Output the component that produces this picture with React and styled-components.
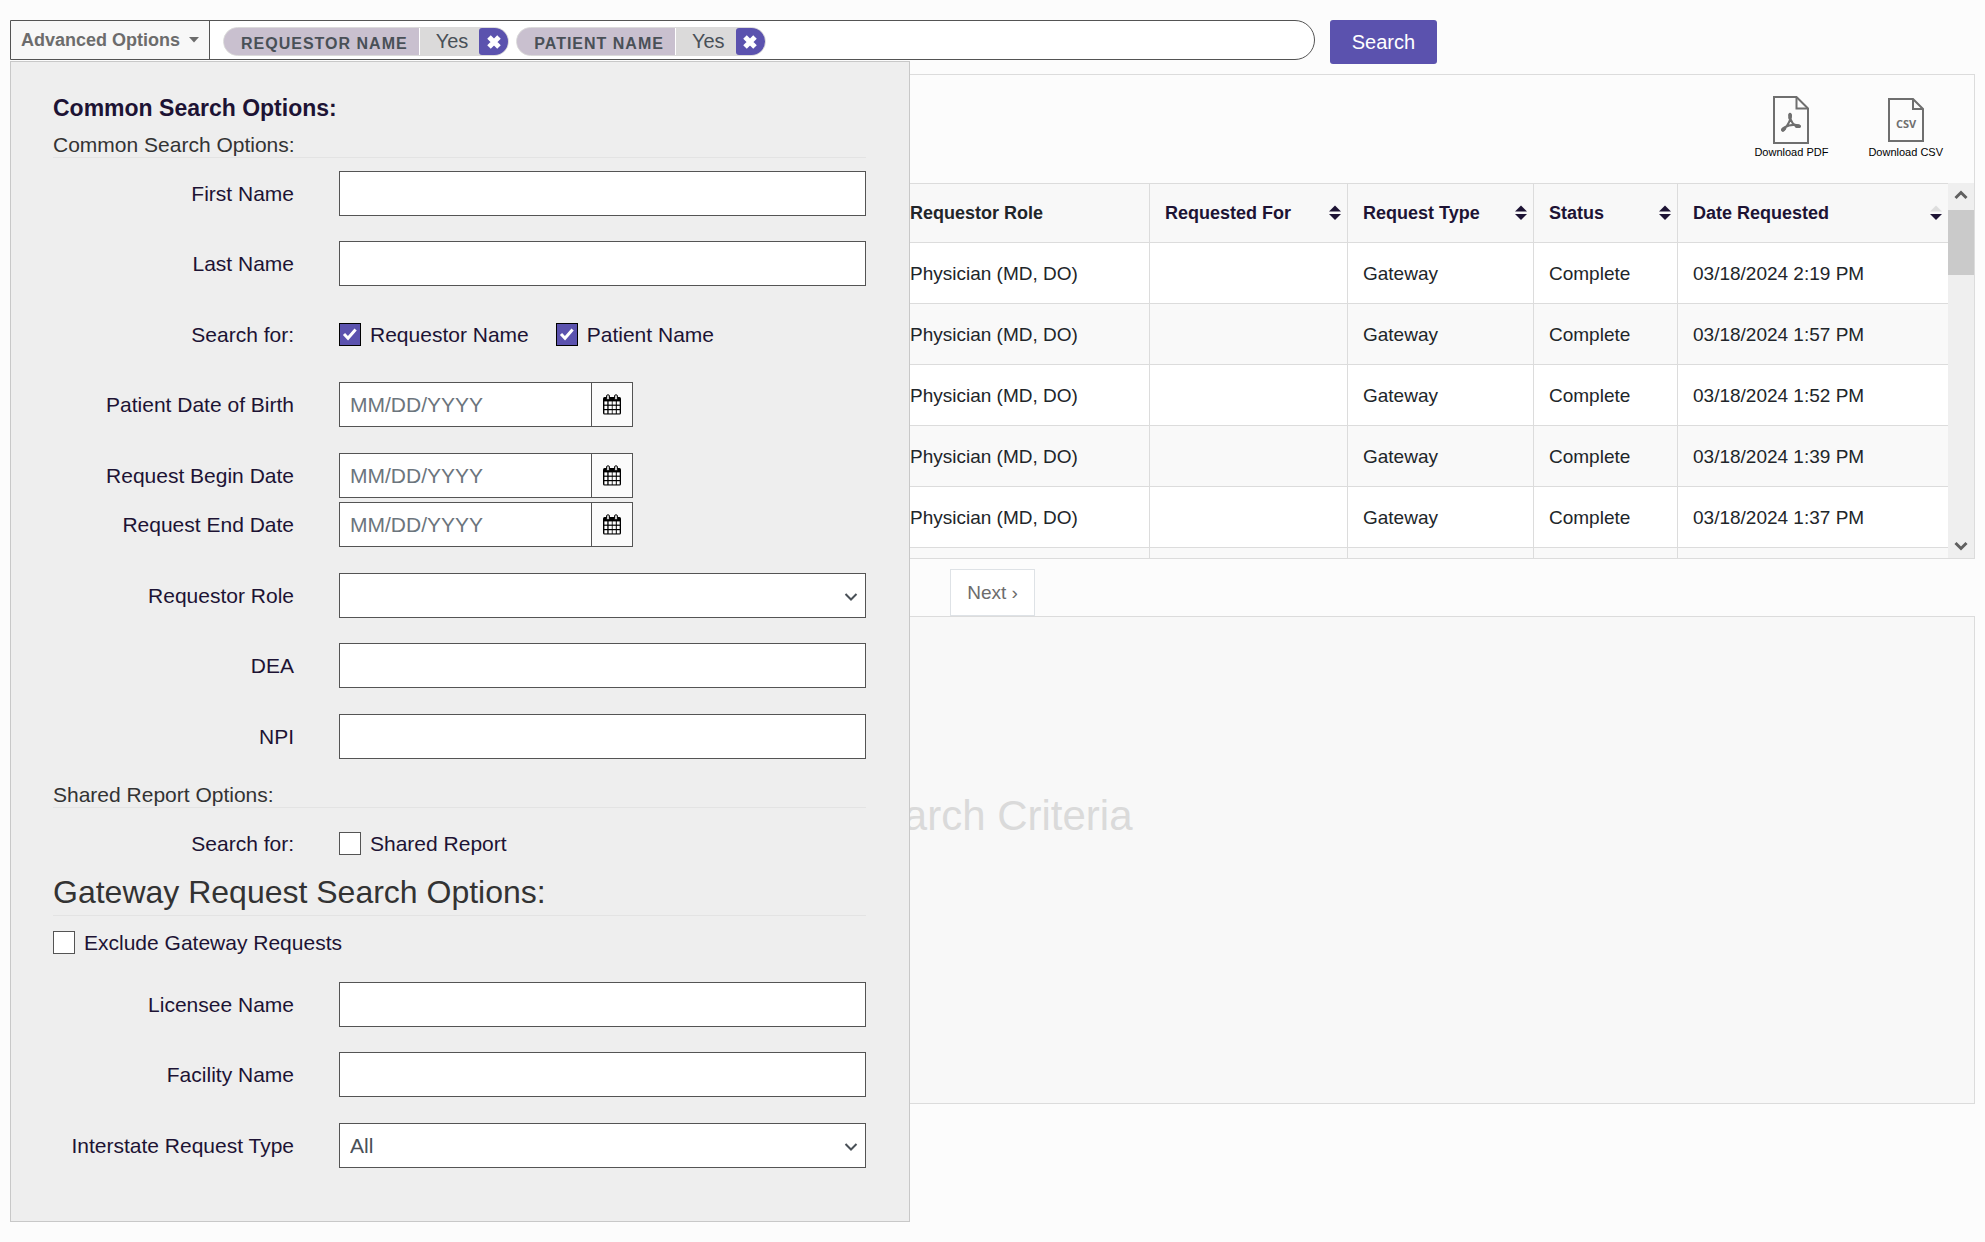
import React from 'react';
import styled, { createGlobalStyle } from 'styled-components';

const GlobalStyle = createGlobalStyle`
  * {
    box-sizing: border-box;
  }

  body {
    margin: 0;
    background-color: #fcfcfc;
    color: #212529;
    font-family: "Liberation Sans", Arial, sans-serif;
    font-size: 20px;
  }

  button, input, select {
    font-family: inherit;
    margin: 0;
  }
`;

const Page = styled.main`
  min-height: 100vh;
  padding: 20px 10px;
`;

const TopBar = styled.div`
  position: relative;
  display: flex;
  align-items: flex-start;
  gap: 15px;
  margin-bottom: 10px;
`;

const SearchBox = styled.div`
  display: flex;
  width: 66.4%;
  height: 40px;
  border: 1px solid #545454;
  border-radius: 0 20px 20px 0;
  background-color: #fff;
  overflow: hidden;
`;

const AdvancedButton = styled.button`
  display: flex;
  align-items: center;
  gap: 9px;
  padding: 0 10px;
  border: none;
  border-right: 1px solid #545454;
  background-color: #f8f8f8;
  color: #6c6c6c;
  font-size: 18px;
  font-weight: bold;
  white-space: nowrap;
  cursor: pointer;
`;

const Chips = styled.div`
  display: flex;
  align-items: center;
  gap: 7px;
  padding: 3px 0 0 13px;
`;

const Chip = styled.div`
  display: flex;
  height: 29px;
  border: 1px solid #dbdada;
  border-radius: 15px;
  background-color: #dbdada;
  color: #495057;
  line-height: 27px;
  overflow: hidden;
`;

const ChipLabel = styled.span`
  padding: 2px 11px 0 17px;
  border-right: 1px solid #fff;
  background-color: #c9c0cf;
  font-size: 16px;
  font-weight: bold;
  letter-spacing: 1px;
`;

const ChipValue = styled.span`
  padding: 0 11px 0 16px;
`;

const ChipRemove = styled.button`
  display: flex;
  align-items: center;
  justify-content: center;
  width: 29px;
  padding: 0;
  border: none;
  border-radius: 3px 0 0 3px;
  background-color: #5b52ae;
  cursor: pointer;
`;

const SearchButton = styled.button`
  height: 44px;
  padding: 0 22px;
  border: none;
  border-radius: 3px;
  background-color: #5b52ae;
  color: #fff;
  font-size: 20px;
  cursor: pointer;
`;

const OptionsPanel = styled.form`
  position: absolute;
  top: 41px;
  left: 0;
  z-index: 2;
  width: 45.8%;
  padding: 31px 43px 53px 42px;
  border: 1px solid #c8c8c8;
  background-color: #eee;
  color: #1d1334;
`;

const PanelTitle = styled.h2`
  margin: 0 0 9px;
  font-size: 23px;
  line-height: 30px;
`;

const SectionTitle = styled.h3`
  margin: 0 0 13px;
  border-bottom: 1px solid #e3e3e3;
  color: #333;
  font-size: 21px;
  font-weight: normal;
  line-height: 25px;
`;

const LargeTitle = styled.h3`
  margin: 4px 0 15px;
  border-bottom: 1px solid #e3e3e3;
  color: #333;
  font-size: 32px;
  font-weight: normal;
  line-height: 45px;
`;

const Section = styled.section`
  display: flex;
  flex-direction: column;
  gap: 26px;
  margin-bottom: ${({ $last }) => ($last ? '0' : '23px')};
`;

const FieldGroup = styled.div`
  display: flex;
  flex-direction: column;
  gap: ${({ $tight }) => ($tight ? '4px' : '25px')};
`;

const FieldRow = styled.div`
  display: grid;
  grid-template-columns: 241px 1fr;
  align-items: center;
  column-gap: 45px;
  height: 45px;
`;

const FieldLabel = styled.label`
  text-align: right;
  font-size: 21px;
`;

const TextInput = styled.input`
  width: 100%;
  height: 45px;
  padding: 0 10px;
  border: 1px solid #545454;
  border-radius: 0;
  background-color: #fff;
  color: #495057;
  font-size: 21px;

  &::placeholder {
    color: #6c757d;
    opacity: 1;
  }
`;

const DateBox = styled.div`
  display: flex;
  width: 294px;
`;

const CalendarButton = styled.button`
  display: flex;
  flex: 0 0 41px;
  align-items: center;
  justify-content: center;
  padding: 0;
  border: 1px solid #545454;
  border-left: none;
  background-color: #fbfbfb;
  cursor: pointer;
`;

const SelectBox = styled.div`
  position: relative;

  svg {
    position: absolute;
    top: 19px;
    right: 8px;
    pointer-events: none;
  }
`;

const Select = styled.select`
  width: 100%;
  height: 45px;
  padding: 0 10px;
  appearance: none;
  border: 1px solid #545454;
  border-radius: 0;
  background-color: #fff;
  color: #495057;
  font-size: 21px;
`;

const CheckList = styled.div`
  display: flex;
  gap: 27px;
`;

const CheckLabel = styled.label`
  display: flex;
  align-items: center;
  gap: 9px;
  font-size: 21px;
  line-height: 23px;
  margin-bottom: ${({ $spaced }) => ($spaced ? '28px' : '0')};
`;

const CheckFrame = styled.span`
  position: relative;
  display: flex;

  svg {
    position: absolute;
    top: 4px;
    left: 3px;
    pointer-events: none;
    visibility: hidden;
  }

  input:checked + svg {
    visibility: visible;
  }
`;

const Checkbox = styled.input`
  width: 22px;
  height: 23px;
  appearance: none;
  border: 1px solid #545454;
  background-color: #fff;

  &:checked {
    border-color: #000;
    background-color: #5b52ae;
  }
`;

const Results = styled.section`
  border: 1px solid #dcdcdc;
`;

const Downloads = styled.div`
  display: flex;
  justify-content: flex-end;
  gap: 40px;
  height: 108px;
  padding: 21px 31px 0 0;
`;

const DownloadButton = styled.button`
  display: flex;
  flex-direction: column;
  align-items: center;
  padding: 0;
  border: none;
  background: none;
  color: #000;
  font-size: 11px;
  line-height: 16px;
  cursor: pointer;
`;

const TableArea = styled.div`
  display: flex;
  height: 375px;
`;

const TableScroll = styled.div`
  flex: 1;
  overflow: hidden;
`;

const Table = styled.table`
  width: 100%;
  table-layout: fixed;
  border-collapse: separate;
  border-spacing: 0;
`;

const Th = styled.th`
  height: 60px;
  padding: 0 6px 0 15px;
  border: solid #dcdcdc;
  border-width: 1px 0 1px 1px;
  background-color: #f8f8f8;
  color: ${({ $sortable }) => ($sortable ? '#1d1334' : '#212529')};
  font-size: 18px;
  text-align: left;
`;

const ThContent = styled.div`
  display: flex;
  align-items: center;
  justify-content: space-between;
`;

const Tr = styled.tr`
  background-color: #fff;

  &:nth-child(even) {
    background-color: #f9f9f9;
  }
`;

const Td = styled.td`
  height: 61px;
  padding: 2px 15px 0;
  border: solid #dcdcdc;
  border-width: 0 0 1px 1px;
  font-size: 19px;
`;

const ScrollBar = styled.div`
  display: flex;
  flex-direction: column;
  align-items: center;
  width: 26px;
  padding: 7px 0;
  background-color: #efefef;
`;

const ScrollThumb = styled.div`
  width: 100%;
  height: 65px;
  margin: 10px 0 auto;
  background-color: #cacaca;
`;

const Pager = styled.nav`
  display: flex;
  justify-content: center;
  padding-top: 10px;
`;

const PageLink = styled.a`
  padding: 0 16px;
  border: 1px solid #dee2e6;
  background-color: #fff;
  color: #6c6c6c;
  font-size: 19px;
  line-height: 45px;
  text-decoration: none;
`;

const Preview = styled.section`
  height: 488px;
  padding-top: 175px;
  border: 1px solid #dcdcdc;
  background-color: #f8f8f8;
  color: #dadada;
  font-size: 42px;
  line-height: 48px;
  text-align: center;
`;

const Caret = () => (
  <svg width="10" height="6" viewBox="0 0 10 6" aria-hidden="true">
    <path d="M0 0h10L5 5.5z" fill="#6c6c6c" />
  </svg>
);

const CrossIcon = () => (
  <svg width="18" height="18" viewBox="0 0 18 18" aria-hidden="true">
    <path d="M4 4l10 10M14 4L4 14" stroke="#fff" strokeWidth="5" />
  </svg>
);

const CheckIcon = () => (
  <svg width="16" height="14" viewBox="0 0 16 14" aria-hidden="true">
    <path d="M2 7l4 4.2L13.6 2.4" fill="none" stroke="#fff" strokeWidth="3" />
  </svg>
);

const Chevron = ({ up, color = '#495057', strokeWidth = 2 }) => (
  <svg width="14" height="10" viewBox="0 0 14 10" aria-hidden="true">
    <path d={up ? 'M1.5 8L7 2.500 12.500 8' : 'M1.500 2L7 7.500 12.500 2'} fill="none" stroke={color} strokeWidth={strokeWidth} />
  </svg>
);

const CalendarIcon = () => (
  <svg width="20" height="21" viewBox="0 0 20 21" aria-hidden="true">
    <rect x="1" y="3" width="18" height="17.5" rx="1.5" fill="#000" />
    <g fill="#fff">
      {[7.4, 11.8, 16.2].map((y) => (
        [2.4, 6.6, 10.6, 14.8].map((x) => (
          <rect key={`${x}-${y}`} x={x} y={y} width={x === 6.6 || x === 10.6 ? 3.2 : 2.9} height="3.2" />
        ))
      ))}
    </g>
    <rect x="4.6" y="0.8" width="2.8" height="5" rx="1.2" fill="#ddd" stroke="#000" />
    <rect x="12.6" y="0.8" width="2.8" height="5" rx="1.2" fill="#ddd" stroke="#000" />
  </svg>
);

const SortIcon = ({ descending }) => (
  <svg width="12" height="16" viewBox="0 0 12 16" aria-hidden="true">
    <path d="M6 0.5l6 6H0z" fill={descending ? '#dedede' : '#1d1334'} />
    <path d="M0 9h12l-6 6z" fill="#1d1334" />
  </svg>
);

const PdfIcon = () => (
  <svg width="36" height="48" viewBox="0 0 36 48" fill="none" stroke="#6f6f6f" aria-hidden="true">
    <path d="M1 1h22.5L35 12.5V47H1z" strokeWidth="2" />
    <path d="M23.5 1v11.5H35" strokeWidth="2" />
    <path d="M17 20c-1.6-3 1.6-3 .9.5-.6 4-3.5 9-6.3 12.5-2.6 3-3.6.5-1-1.2 4-2.3 9-3.100 13-2.900 4.600.2 4.200 3 .8 1.900-3.700-1.200-7-5.600-7.400-10.800z" strokeWidth="2" />
    <path d="M16.900 19v3M10 34l1.500-1.500M23.500 30.300h2.500" strokeWidth="3.400" strokeLinecap="round" />
  </svg>
);

const CsvIcon = () => (
  <svg width="36" height="48" viewBox="0 0 36 48" fill="none" stroke="#6f6f6f" aria-hidden="true">
    <path d="M1 3h24l10 10v32H1z" strokeWidth="2" />
    <path d="M25 3v10h10" strokeWidth="2" />
    <text
      x="18"
      y="32"
      fill="#6f6f6f"
      stroke="none"
      fontFamily="'Liberation Sans Narrow', 'Open Sans', sans-serif"
      fontSize="11"
      fontWeight="bold"
      textAnchor="middle"
    >
      CSV
    </text>
  </svg>
);

const columns = [
  { name: 'Requestor Role', width: 255 },
  { name: 'Requested For', width: 198, sortable: true },
  { name: 'Request Type', width: 186, sortable: true },
  { name: 'Status', width: 144, sortable: true },
  { name: 'Date Requested', width: 271, sortable: true, descending: true },
];

const requests = [
  '03/18/2024 2:19 PM',
  '03/18/2024 1:57 PM',
  '03/18/2024 1:52 PM',
  '03/18/2024 1:39 PM',
  '03/18/2024 1:37 PM',
].map((date) => ['Physician (MD, DO)', '', 'Gateway', 'Complete', date]);

const TextField = ({ id, label }) => (
  <FieldRow>
    <FieldLabel htmlFor={id}>{label}</FieldLabel>
    <TextInput id={id} type="text" />
  </FieldRow>
);

const DateField = ({ id, label }) => (
  <FieldRow>
    <FieldLabel htmlFor={id}>{label}</FieldLabel>
    <DateBox>
      <TextInput id={id} type="text" placeholder="MM/DD/YYYY" />
      <CalendarButton type="button"><CalendarIcon /></CalendarButton>
    </DateBox>
  </FieldRow>
);

const SelectField = ({ id, label, options }) => (
  <FieldRow>
    <FieldLabel htmlFor={id}>{label}</FieldLabel>
    <SelectBox>
      <Select id={id}>
        {options.map((option) => <option key={option}>{option}</option>)}
      </Select>
      <Chevron />
    </SelectBox>
  </FieldRow>
);

const CheckField = ({ label, checked, spaced }) => (
  <CheckLabel $spaced={spaced}>
    <CheckFrame>
      <Checkbox type="checkbox" defaultChecked={checked} />
      <CheckIcon />
    </CheckFrame>
    {label}
  </CheckLabel>
);

const AdvancedOptions = () => (
  <OptionsPanel>
    <PanelTitle>Common Search Options:</PanelTitle>
    <SectionTitle>Common Search Options:</SectionTitle>
    <Section>
      <FieldGroup>
        <TextField id="firstName" label="First Name" />
        <TextField id="lastName" label="Last Name" />
      </FieldGroup>
      <FieldGroup>
        <FieldRow>
          <FieldLabel as="span">Search for:</FieldLabel>
          <CheckList>
            <CheckField label="Requestor Name" checked />
            <CheckField label="Patient Name" checked />
          </CheckList>
        </FieldRow>
        <DateField id="birthDate" label="Patient Date of Birth" />
      </FieldGroup>
      <FieldGroup $tight>
        <DateField id="beginDate" label="Request Begin Date" />
        <DateField id="endDate" label="Request End Date" />
      </FieldGroup>
      <FieldGroup>
        <SelectField id="role" label="Requestor Role" options={['']} />
        <TextField id="dea" label="DEA" />
      </FieldGroup>
      <TextField id="npi" label="NPI" />
    </Section>

    <SectionTitle>Shared Report Options:</SectionTitle>
    <FieldRow>
      <FieldLabel as="span">Search for:</FieldLabel>
      <CheckField label="Shared Report" />
    </FieldRow>

    <LargeTitle>Gateway Request Search Options:</LargeTitle>
    <CheckField label="Exclude Gateway Requests" spaced />
    <Section $last>
      <FieldGroup>
        <TextField id="licensee" label="Licensee Name" />
        <TextField id="facility" label="Facility Name" />
      </FieldGroup>
      <SelectField id="requestType" label="Interstate Request Type" options={['All']} />
    </Section>
  </OptionsPanel>
);

const RequestTable = () => (
  <TableArea>
    <TableScroll>
      <Table>
        <colgroup>
          <col />
          {columns.map(({ name, width }) => <col key={name} width={width} />)}
        </colgroup>
        <thead>
          <tr>
            <Th />
            {columns.map(({ name, sortable, descending }) => (
              <Th key={name} $sortable={sortable}>
                <ThContent>
                  {name}
                  {sortable && <SortIcon descending={descending} />}
                </ThContent>
              </Th>
            ))}
          </tr>
        </thead>
        <tbody>
          {requests.map((cells) => (
            <Tr key={cells[4]}>
              <Td />
              {cells.map((cell, index) => <Td key={index}>{cell}</Td>)}
            </Tr>
          ))}
          <Tr>
            <Td />
            {columns.map(({ name }) => <Td key={name} />)}
          </Tr>
        </tbody>
      </Table>
    </TableScroll>
    <ScrollBar aria-hidden="true">
      <Chevron up color="#606060" strokeWidth={3} />
      <ScrollThumb />
      <Chevron color="#606060" strokeWidth={3} />
    </ScrollBar>
  </TableArea>
);

const App = () => {
  return (
    <>
      <GlobalStyle />
      <Page>
        <TopBar>
          <SearchBox>
            <AdvancedButton type="button">
              Advanced Options
              <Caret />
            </AdvancedButton>
            <Chips>
              {['REQUESTOR NAME', 'PATIENT NAME'].map((name) => (
                <Chip key={name}>
                  <ChipLabel>{name}</ChipLabel>
                  <ChipValue>Yes</ChipValue>
                  <ChipRemove type="button"><CrossIcon /></ChipRemove>
                </Chip>
              ))}
            </Chips>
          </SearchBox>
          <SearchButton type="button">Search</SearchButton>
          <AdvancedOptions />
        </TopBar>

        <Results>
          <Downloads>
            <DownloadButton type="button"><PdfIcon />Download PDF</DownloadButton>
            <DownloadButton type="button"><CsvIcon />Download CSV</DownloadButton>
          </Downloads>
          <RequestTable />
        </Results>
        <Pager>
          <PageLink href="#next">Next ›</PageLink>
        </Pager>
        <Preview>Search Criteria</Preview>
      </Page>
    </>
  );
};

export default App;
